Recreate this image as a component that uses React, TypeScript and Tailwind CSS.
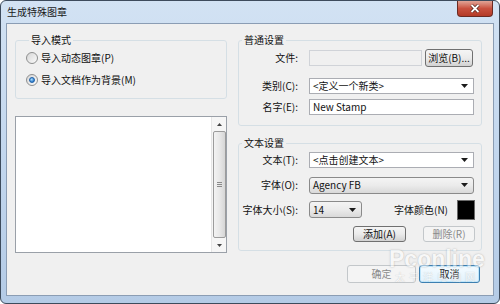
import clsx from "clsx";
import type { ReactNode } from "react";

const Arrow = () => (
  <svg width="7" height="4" viewBox="0 0 7 4" className="shrink-0">
    <path d="M0 0h7L3.5 4z" fill="#1b1b1b" />
  </svg>
);

const Radio = ({ checked }: { checked?: boolean }) => (
  <span className="flex size-[12px] shrink-0 items-center justify-center rounded-full border border-[#8e8f8f] bg-linear-to-br from-[#d6d6d6] to-[#fbfbfb]">
    {checked && (
      <span className="size-[6px] rounded-full border border-[#1c5fa8] bg-[radial-gradient(circle_at_40%_35%,#a8ddff,#2a78c8_75%)]" />
    )}
  </span>
);

const Combo = ({
  text,
  className,
  raised,
}: {
  text: string;
  className?: string;
  raised?: boolean;
}) => (
  <div
    className={clsx(
      "flex items-center justify-between pl-[3px] pr-[5px]",
      raised
        ? "rounded-[3px] border border-[#8a8a8a] bg-linear-to-b from-[#f4f4f4] via-[#ebebeb] to-[#d9d9d9]"
        : "border border-[#abadb3] bg-white",
      className
    )}
  >
    <span>{text}</span>
    <Arrow />
  </div>
);

const Btn = ({
  children,
  className,
  disabled,
  primary,
}: {
  children: ReactNode;
  className?: string;
  disabled?: boolean;
  primary?: boolean;
}) => (
  <div
    className={clsx(
      "flex items-center justify-center rounded-[3px] border",
      disabled
        ? "border-[#c3c7ca] bg-[#f4f4f4] text-[#8a8a8a]"
        : primary
          ? "border-[#3c7fb1] bg-linear-to-b from-[#f4fbff] to-[#e2f2fc] shadow-[inset_0_0_0_1px_#bfe6fb]"
          : "border-[#707070] bg-linear-to-b from-[#f5f5f5] via-[#ebebeb] to-[#d2d2d2]",
      className
    )}
  >
    {children}
  </div>
);

const Label = ({ children }: { children: ReactNode }) => (
  <span className="w-[59px] shrink-0 text-right">{children}</span>
);

const Legend = ({ children }: { children: ReactNode }) => (
  <legend className="ml-[3px] px-[2px] leading-[14px]">{children}</legend>
);

const App = () => {
  return (
    <div className="relative flex h-[304px] w-[500px] flex-col overflow-hidden rounded-[6px] border border-[#3d4b5c] bg-linear-to-b from-[#d2e2f3] via-[#c3d7ee] to-[#b4cbe6] font-['Noto_Sans_CJK_SC',sans-serif] text-[10px] leading-[14px] text-[#111]">
      <div className="flex h-[22px] shrink-0 items-start justify-between">
        <span className="pl-[6px] pt-[4px] text-[10px] text-[#1a1a1a]">生成特殊图章</span>
        <div className="mr-[6px] flex h-[16px] w-[36px] items-center justify-center rounded-b-[4px] border border-t-0 border-[#6b2a22] bg-linear-to-b from-[#e0a497] via-[#c9513f] to-[#b33a26]">
          <svg width="10" height="9" viewBox="0 0 10 9">
            <path d="M1.5 1 8.5 8M8.5 1 1.5 8" stroke="#4a1a12" strokeWidth="3.2" />
            <path d="M1.5 1 8.5 8M8.5 1 1.5 8" stroke="#fff" strokeWidth="1.8" />
          </svg>
        </div>
      </div>

      <div className="mx-[5px] mb-[7px] flex flex-1 gap-[11px] border border-[#8b9db4] bg-[#f0f0f0] pl-[8px] pt-[9px]">
        <div className="flex w-[212px] flex-col">
          <fieldset className="h-[66px] rounded-[3px] border border-[#d5dfe5] pl-[10px]">
            <Legend>导入模式</Legend>
            <div className="mt-[2px] flex h-[18px] items-center gap-[3px]">
              <Radio />
              <span>导入动态图章(P)</span>
            </div>
            <div className="mt-[4px] flex h-[18px] items-center gap-[3px]">
              <Radio checked />
              <span>导入文档作为背景(M)</span>
            </div>
          </fieldset>

          <div className="mt-[17px] flex h-[137px] border border-[#9aa0a8] bg-white">
            <div className="flex-1" />
            <div className="flex w-[15px] flex-col items-center border-l border-[#e6e6e6] bg-[#f6f6f6]">
              <div className="flex h-[14px] items-center">
                <svg width="5" height="3" viewBox="0 0 5 3">
                  <path d="M0 3h5L2.5 0z" fill="#444" />
                </svg>
              </div>
              <div className="flex w-[13px] flex-1 items-center justify-center rounded-[2px] border border-[#9c9c9c] bg-linear-to-r from-[#f3f3f3] via-[#e8e8e8] to-[#d6d6d6]">
                <div className="flex flex-col gap-[1px]">
                  <span className="h-px w-[5px] bg-[#8a8a8a]" />
                  <span className="h-px w-[5px] bg-[#8a8a8a]" />
                  <span className="h-px w-[5px] bg-[#8a8a8a]" />
                </div>
              </div>
              <div className="flex h-[14px] items-center">
                <svg width="5" height="3" viewBox="0 0 5 3">
                  <path d="M0 0h5L2.5 3z" fill="#444" />
                </svg>
              </div>
            </div>
          </div>
        </div>

        <div className="flex w-[244px] flex-col">
          <fieldset className="h-[93px] rounded-[3px] border border-[#d5dfe5]">
            <Legend>普通设置</Legend>
            <div className="mt-[2px] flex h-[18px] items-center">
              <Label>文件:</Label>
              <div className="ml-[11px] h-[16px] w-[113px] border border-[#d0d3d8] bg-[#f0f0f0]" />
              <Btn className="ml-[3px] h-[18px] w-[48px]">浏览(B)...</Btn>
            </div>
            <div className="mt-[10px] flex h-[18px] items-center">
              <Label>类别(C):</Label>
              <Combo text="<定义一个新类>" className="ml-[11px] h-[16px] w-[165px]" />
            </div>
            <div className="mt-[3px] flex h-[18px] items-center">
              <Label>名字(E):</Label>
              <div className="ml-[11px] flex h-[16px] w-[165px] items-center border border-[#abadb3] bg-white pl-[3px]">
                New Stamp
              </div>
            </div>
          </fieldset>

          <fieldset className="mt-[10px] h-[115px] rounded-[3px] border border-[#d5dfe5]">
            <Legend>文本设置</Legend>
            <div className="mt-[1px] flex h-[18px] items-center">
              <Label>文本(T):</Label>
              <Combo text="<点击创建文本>" className="ml-[11px] h-[16px] w-[165px]" />
            </div>
            <div className="mt-[7px] flex h-[18px] items-center">
              <Label>字体(O):</Label>
              <Combo text="Agency FB" raised className="ml-[11px] h-[17px] w-[165px]" />
            </div>
            <div className="mt-[5px] flex h-[21px] items-center">
              <Label>字体大小(S):</Label>
              <Combo text="14" raised className="ml-[11px] h-[17px] w-[53px]" />
              <span className="ml-auto">字体颜色(N)</span>
              <div className="ml-[9px] mr-[6px] h-[20px] w-[18px] border border-[#6a6a6a] bg-black" />
            </div>
            <div className="mt-[6px] flex h-[16px] items-center justify-end gap-[17px] pr-[6px]">
              <Btn className="h-[16px] w-[53px]">添加(A)</Btn>
              <Btn disabled className="h-[16px] w-[52px]">删除(R)</Btn>
            </div>
          </fieldset>

          <div className="mt-[14px] flex h-[18px] justify-end gap-[3px] pr-[2px]">
            <Btn disabled className="w-[69px]">确定</Btn>
            <Btn primary className="w-[61px]">取消</Btn>
          </div>
        </div>
      </div>

      <div className="pointer-events-none absolute left-[388px] top-[246px] flex flex-col items-center opacity-50">
        <span className="font-['Liberation_Sans',sans-serif] text-[23px] leading-[24px] font-bold text-white [text-shadow:0_0_1px_#8a8a8a,0_0_2px_#a8a8a8]">
          Pconline
        </span>
        <span className="text-[10px] leading-[11px] tracking-[4px] text-white [text-shadow:0_0_1px_#8a8a8a]">
          太平洋电脑网
        </span>
      </div>
    </div>
  );
};

export default App;
